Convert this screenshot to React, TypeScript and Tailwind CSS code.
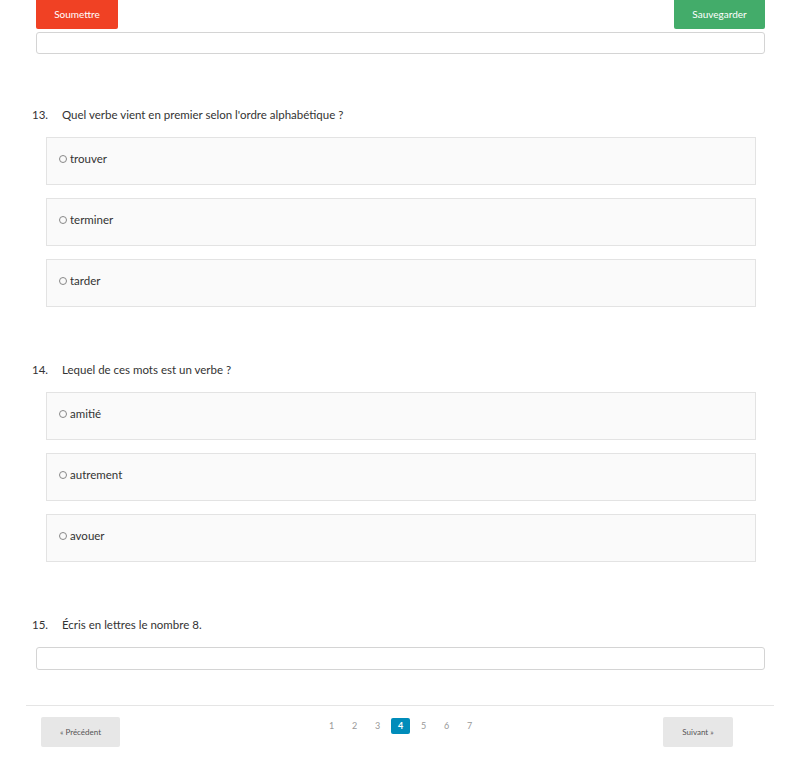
import React from 'react'

const font = { fontFamily: 'Lato, "Open Sans", sans-serif' }

type Q = { n: number; text: string; options?: string[] }

const questions: Q[] = [
  { n: 13, text: "Quel verbe vient en premier selon l'ordre alphabétique ?", options: ['trouver', 'terminer', 'tarder'] },
  { n: 14, text: 'Lequel de ces mots est un verbe ?', options: ['amitié', 'autrement', 'avouer'] },
  { n: 15, text: 'Écris en lettres le nombre 8.' },
]

function Question({ q, first }: { q: Q; first: boolean }) {
  return (
    <div className={first ? 'mt-[54px]' : 'mt-[56px]'}>
      <div className="flex h-[14px] items-center pl-[32px] text-[11.5px] text-[#333]">
        <span className="w-[30px]">{q.n}.</span>
        <span>{q.text}</span>
      </div>
      {q.options ? (
        <div className="mt-[15px] flex flex-col gap-[13px] pl-[46px] pr-[44px]">
          {q.options.map((o) => (
            <div
              key={o}
              className="flex h-[48px] items-start border border-[#e3e3e3] bg-[#fafafa] pl-[12px] pt-[14px] text-[11.5px] text-[#333]"
            >
              <span className="mr-[3px] mt-[3px] inline-block h-[8px] w-[8px] rounded-full border border-[#888]" />
              <span className="leading-[14px]">{o}</span>
            </div>
          ))}
        </div>
      ) : (
        <div className="pl-[36px] pr-[35px] pt-[15px]">
          <div className="h-[23px] rounded-[3px] border border-[#d4d4d4] bg-white" />
        </div>
      )}
    </div>
  )
}

export default function App() {
  const pages = [1, 2, 3, 4, 5, 6, 7]
  return (
    <div className="min-h-[762px] w-[800px] bg-white" style={font}>
      {/* top actions */}
      <div className="flex justify-between pl-[36px] pr-[35px]">
        <button className="h-[29px] w-[82px] rounded-b-[2px] bg-[#f04124] text-[10px] text-white">Soumettre</button>
        <button className="h-[29px] w-[91px] rounded-b-[2px] bg-[#43ac6a] text-[10px] text-white">Sauvegarder</button>
      </div>
      <div className="mt-[3px] pl-[36px] pr-[35px]">
        <div className="h-[22px] rounded-[3px] border border-[#d4d4d4] bg-white" />
      </div>

      {questions.map((q, i) => (
        <Question key={q.n} q={q} first={i === 0} />
      ))}

      {/* pagination */}
      <div className="mx-[26px] mt-[35px] border-t border-[#e5e5e5]">
        <div className="flex items-start justify-between pl-[15px] pr-[41px] pt-[11px]">
          <button className="h-[30px] w-[79px] rounded-[2px] bg-[#e7e7e7] text-[8px] text-[#555]">« Précédent</button>
          <div className="ml-[18px] flex items-center gap-[4px] pt-[1px]">
            {pages.map((p) =>
              p === 4 ? (
                <span key={p} className="flex h-[16px] w-[19px] items-center justify-center rounded-[2px] bg-[#008cba] text-[9px] font-bold text-white">
                  {p}
                </span>
              ) : (
                <span key={p} className="flex h-[16px] w-[19px] items-center justify-center text-[9px] text-[#999]">
                  {p}
                </span>
              )
            )}
          </div>
          <button className="h-[30px] w-[70px] rounded-[2px] bg-[#e7e7e7] text-[8px] text-[#555]">Suivant »</button>
        </div>
      </div>
    </div>
  )
}
